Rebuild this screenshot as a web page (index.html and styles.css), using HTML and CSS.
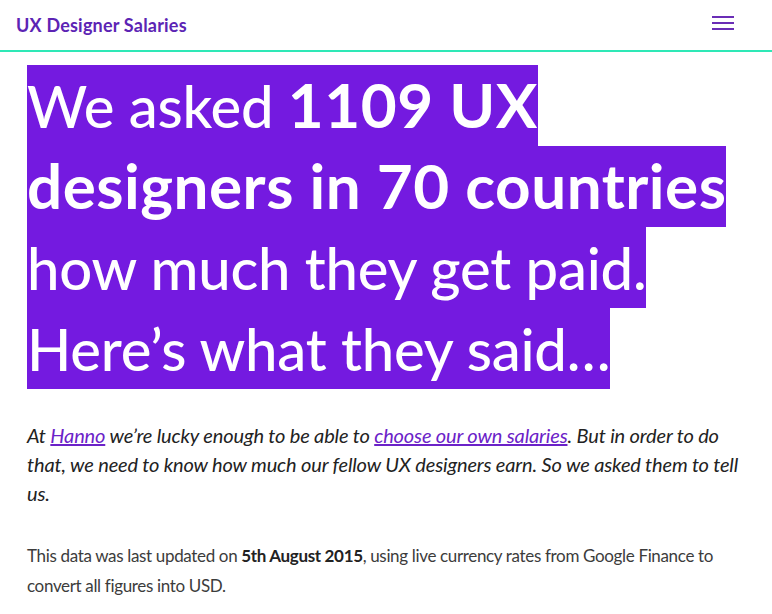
FILE: index.html
```html
<!DOCTYPE html>
<html lang="en">
<head>
<meta charset="utf-8">
<title>UX Designer Salaries</title>
<link rel="stylesheet" href="styles.css">
</head>
<body>
<header class="topbar">
  <a class="brand" href="#">UX Designer Salaries</a>
  <button class="menu" aria-label="Menu">
    <span class="bar"></span><span class="bar"></span><span class="bar"></span>
  </button>
</header>
<main class="content">
  <h1 class="headline"><span class="hl">We asked <strong>1109 UX designers in 70 countries</strong> how much they get paid. Here’s what they said…</span></h1>
  <p class="intro">At <a href="#">Hanno</a> we’re lucky enough to be able to <a href="#">choose our own salaries</a>. But in order to do that, we need to know how much our fellow UX designers earn. So we asked them to tell us.</p>
  <p class="note">This data was last updated on <strong>5th August 2015</strong>, using live currency rates from Google Finance to convert all figures into USD.</p>
</main>
</body>
</html>
```
FILE: styles.css
```css
html, body {
  margin: 0;
  padding: 0;
  background: #ffffff;
}
body {
  font-family: "Lato", "Open Sans", sans-serif;
  color: #222;
}
.topbar {
  height: 50px;
  display: flex;
  align-items: center;
  justify-content: space-between;
  padding: 0 38px 0 16px;
  border-bottom: 2px solid #2ee8b6;
}
.brand {
  font-size: 18px;
  font-weight: 700;
  letter-spacing: 0.2px;
  color: #5c24b4;
  text-decoration: none;
}
.menu {
  display: flex;
  flex-direction: column;
  gap: 4px;
  width: 22px;
  padding: 0;
  margin: 0 0 4px 0;
  border: 0;
  background: none;
}
.bar {
  display: block;
  height: 2px;
  width: 22px;
  background: #6a2db6;
}
.content {
  padding: 0 27px;
}
.headline {
  margin: 13px 0 0 0;
  font-size: 58px;
  line-height: 81px;
  font-weight: 500;
  letter-spacing: -0.2px;
  color: #ffffff;
}
.hl {
  background: #741ae0;
  padding: 5.7px 0;
}
.headline strong {
  font-size: 62px;
  line-height: 1;
  font-weight: 700;
  letter-spacing: 0.5px;
}
.intro {
  margin: 32px 0 0 0;
  font-size: 20px;
  line-height: 29px;
  letter-spacing: -0.15px;
  font-style: italic;
  color: #222;
}
.intro a {
  color: #6b22c8;
  text-decoration: underline;
}
.note {
  margin: 33px 0 0 0;
  font-size: 17px;
  line-height: 30px;
  letter-spacing: -0.34px;
  color: #3c3c3c;
}
.note strong {
  font-weight: 700;
  color: #222;
}
```
